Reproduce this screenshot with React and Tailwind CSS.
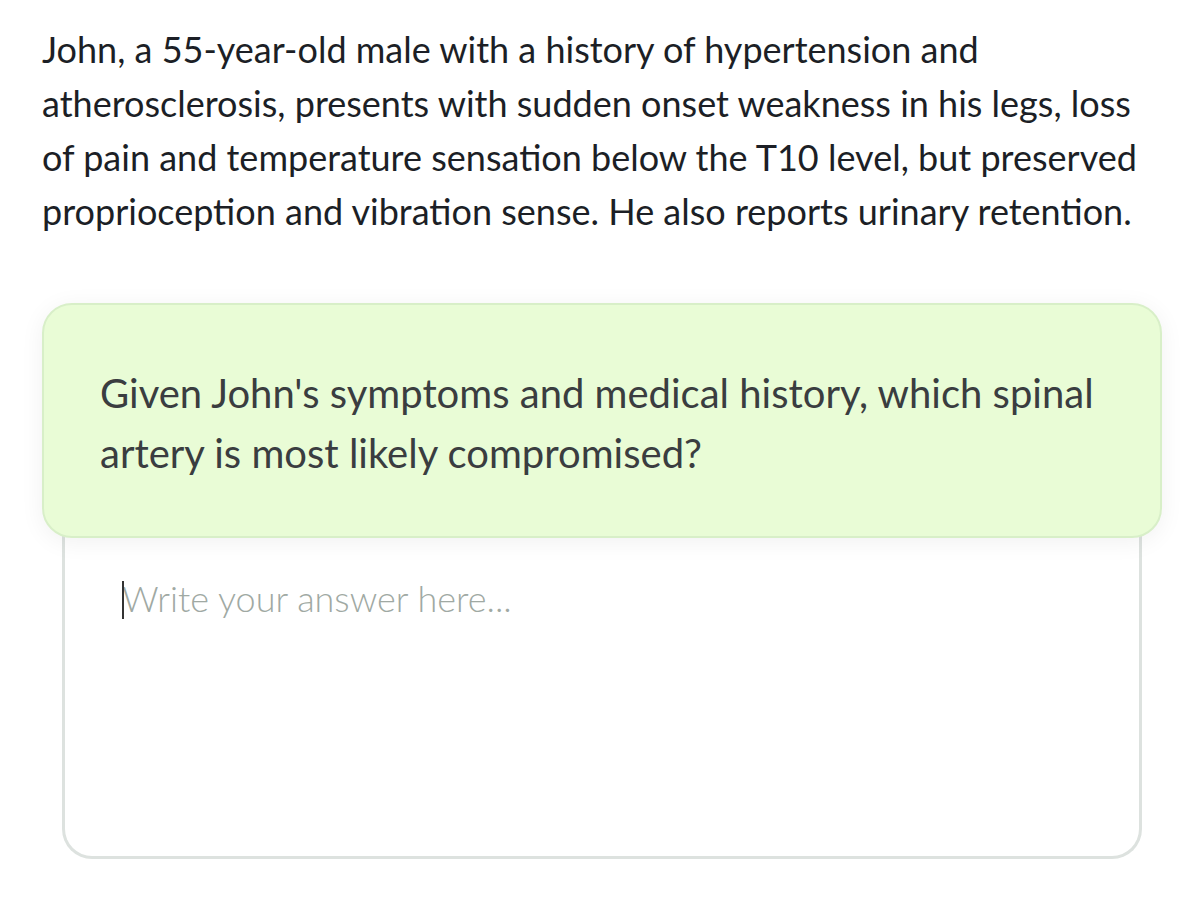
export default function App() {
  return (
    <div className="min-h-screen bg-white font-['Lato',sans-serif]">
      <div className="w-[1162px] pl-[42px] pt-[22px]">
        {/* Case description */}
        <p className="w-[1112px] text-[36px] leading-[54px] text-[#1c1f26]">
          John, a 55-year-old male with a history of hypertension and atherosclerosis, presents with sudden onset weakness in his legs, loss of pain and temperature sensation below the T10 level, but preserved proprioception and vibration sense. He also reports urinary retention.
        </p>

        <div className="mt-[65px]">
          {/* Question card */}
          <div className="relative z-10 rounded-[30px] border-2 border-[#d8efc8] bg-[#e9fcd6] pl-[56px] pr-[40px] pt-[58px] pb-[53px] shadow-[0_4px_24px_rgba(0,0,0,0.06)]">
            <h2 className="text-[40px] leading-[60px] text-[#3a3d40]">
              Given John's symptoms and medical history, which spinal artery is most likely compromised?
            </h2>
          </div>

          {/* Answer box */}
          <div className="relative mx-[20px] -mt-[30px] h-[351px] rounded-b-[30px] border-[3px] border-t-0 border-[#dde2df] bg-white">
            <textarea
              className="h-full w-full resize-none bg-transparent pl-[57px] pr-[40px] pt-[68px] text-[36px] font-light leading-[44px] text-[#333] placeholder:text-[#a0a9a3] outline-none"
              placeholder="Write your answer here..."
            />
            <span className="absolute left-[57px] top-[73px] h-[38px] w-[2px] bg-[#333]"></span>
          </div>
        </div>
      </div>
    </div>
  );
}
